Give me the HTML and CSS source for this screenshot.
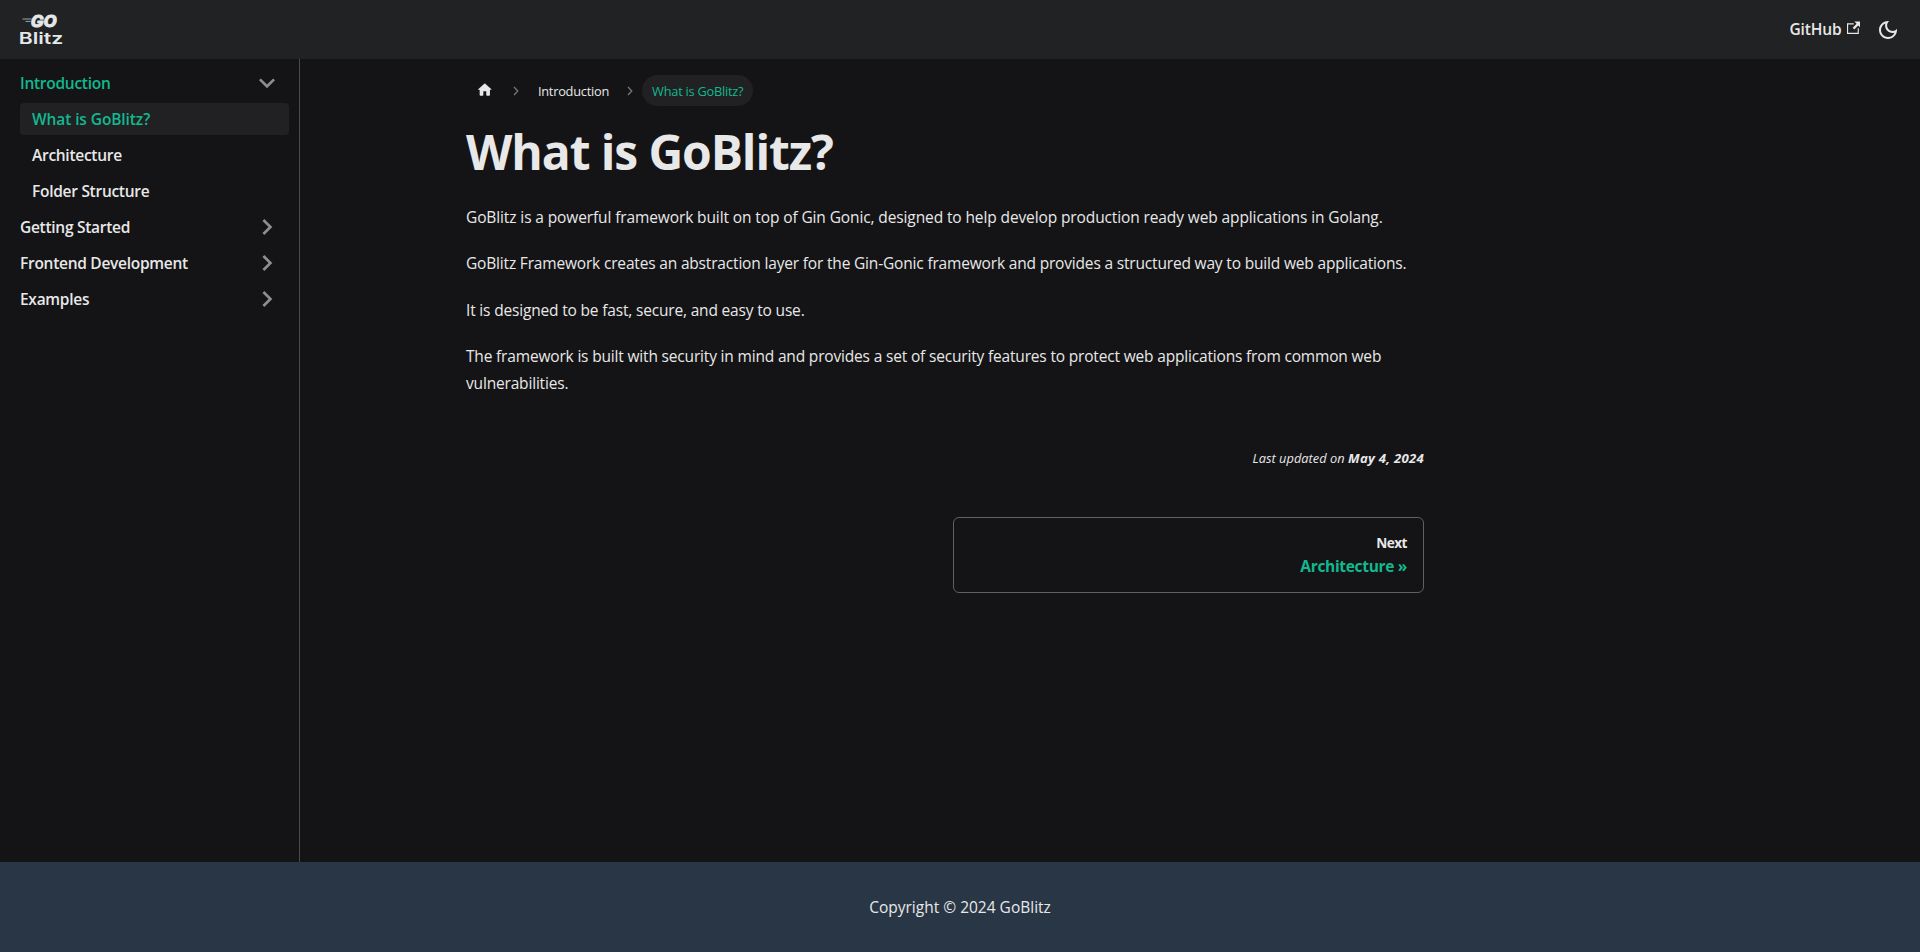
FILE: index.html
```html
<!DOCTYPE html>
<html lang="en">
<head>
<meta charset="utf-8">
<title>What is GoBlitz? | GoBlitz</title>
<link rel="stylesheet" href="styles.css">
</head>
<body>
<header class="navbar">
  <a class="brand" aria-label="GoBlitz">
    <svg class="logo" width="44" height="38" viewBox="0 0 44 38">
      <path class="logo-speed" d="M2.5 8h9M5.5 10.4h5"/>
      <text class="logo-go" x="10.8" y="16" textLength="26" lengthAdjust="spacingAndGlyphs">GO</text>
      <text class="logo-blitz" x="-1.2" y="32.8" textLength="44.5" lengthAdjust="spacingAndGlyphs">Blitz</text>
    </svg>
  </a>
  <nav class="navbar-right">
    <a class="navbar-link">GitHub
      <svg class="external" width="13.5" height="13.5" viewBox="0 0 24 24"><path d="M21 13v10h-21v-19h12v2h-10v15h17v-8h2zm3-12h-10.988l4.035 4-6.977 7.07 2.828 2.828 6.977-7.07 4.125 4.172v-11z"/></svg>
    </a>
    <button class="theme-toggle" aria-label="Switch theme">
      <svg width="24" height="24" viewBox="0 0 24 24"><path d="M9.37,5.51C9.19,6.15,9.1,6.82,9.1,7.5c0,4.08,3.32,7.4,7.4,7.4c0.68,0,1.35-0.09,1.99-0.27C17.45,17.19,14.93,19,12,19c-3.86,0-7-3.14-7-7C5,9.07,6.81,6.55,9.37,5.51z M12,3c-4.97,0-9,4.03-9,9s4.03,9,9,9s9-4.03,9-9c0-0.46-0.04-0.92-0.1-1.36c-0.98,1.37-2.58,2.26-4.4,2.26c-2.98,0-5.4-2.42-5.4-5.4c0-1.81,0.89-3.42,2.26-4.4C12.92,3.04,12.46,3,12,3L12,3z"/></svg>
    </button>
  </nav>
</header>
<div class="layout">
  <aside class="sidebar">
    <ul class="menu">
      <li><a class="menu-link menu-link-open">Introduction<svg class="caret caret-open" width="32" height="32" viewBox="0 0 24 24"><path d="M7.41 15.41L12 10.83l4.59 4.58L18 14l-6-6-6 6z"/></svg></a>
        <ul class="menu menu-nested">
          <li><a class="menu-link menu-link-active">What is GoBlitz?</a></li>
          <li><a class="menu-link">Architecture</a></li>
          <li><a class="menu-link">Folder Structure</a></li>
        </ul>
      </li>
      <li><a class="menu-link">Getting Started<svg class="caret" width="32" height="32" viewBox="0 0 24 24"><path d="M7.41 15.41L12 10.83l4.59 4.58L18 14l-6-6-6 6z"/></svg></a></li>
      <li><a class="menu-link">Frontend Development<svg class="caret" width="32" height="32" viewBox="0 0 24 24"><path d="M7.41 15.41L12 10.83l4.59 4.58L18 14l-6-6-6 6z"/></svg></a></li>
      <li><a class="menu-link">Examples<svg class="caret" width="32" height="32" viewBox="0 0 24 24"><path d="M7.41 15.41L12 10.83l4.59 4.58L18 14l-6-6-6 6z"/></svg></a></li>
    </ul>
  </aside>
  <main class="content">
    <article class="doc">
      <nav class="breadcrumbs">
        <a class="crumb crumb-home" aria-label="Home"><svg width="17.6" height="17.6" viewBox="0 0 24 24"><path d="M10 19v-5h4v5c0 .55.45 1 1 1h3c.55 0 1-.45 1-1v-7h1.7c.46 0 .68-.57.33-.87L12.67 3.6c-.38-.34-.96-.34-1.34 0l-8.36 7.53c-.34.3-.13.87.33.87H5v7c0 .55.45 1 1 1h3c.55 0 1-.45 1-1z"/></svg></a>
        <svg class="separator" width="6" height="10" viewBox="0 0 6 10"><path d="M1 1l3.8 4L1 9"/></svg>
        <a class="crumb">Introduction</a>
        <svg class="separator" width="6" height="10" viewBox="0 0 6 10"><path d="M1 1l3.8 4L1 9"/></svg>
        <a class="crumb crumb-active">What is GoBlitz?</a>
      </nav>
      <h1 class="title">What is GoBlitz?</h1>
      <p class="para">GoBlitz is a powerful framework built on top of Gin Gonic, designed to help develop production ready web applications in Golang.</p>
      <p class="para para-tight">GoBlitz Framework creates an abstraction layer for the Gin-Gonic framework and provides a structured way to build web applications.</p>
      <p class="para para-tight">It is designed to be fast, secure, and easy to use.</p>
      <p class="para para-tight">The framework is built with security in mind and provides a set of security features to protect web applications from common web vulnerabilities.</p>
      <footer class="updated">Last updated on <b class="updated-date">May 4, 2024</b></footer>
      <nav class="pagination">
        <a class="next">
          <span class="next-label">Next</span>
          <span class="next-title">Architecture »</span>
        </a>
      </nav>
    </article>
  </main>
</div>
<footer class="footer">Copyright © 2024 GoBlitz</footer>
</body>
</html>
```
FILE: styles.css
```css
* { box-sizing: border-box; }
body {
  margin: 0;
  height: 952px;
  display: flex;
  flex-direction: column;
  background: #141416;
  color: #e8e8e8;
  font: 400 15.5px/26.4px "Open Sans", "Noto Sans", sans-serif;
}
svg { display: block; fill: currentColor; }
.navbar {
  height: 59px;
  flex: none;
  display: flex;
  align-items: center;
  justify-content: space-between;
  padding: 0 20px;
  background: #202223;
}
.logo { fill: #e4e8ea; overflow: visible; }
.logo-speed { stroke: #a0a5a8; stroke-width: 1; }
.logo-go { font: italic 800 15.5px/1 Inter, sans-serif; stroke: #e4e8ea; stroke-width: .8; }
.logo-blitz { font: 600 16px/1 Inter, sans-serif; }
.navbar-right { display: flex; align-items: center; }
.navbar-link { display: flex; align-items: center; gap: 5px; font-weight: 600; letter-spacing: -.13px; }
.external { margin-top: -3px; }
.theme-toggle {
  width: 32px;
  height: 32px;
  margin: 0 -4px 0 12px;
  padding: 0;
  display: grid;
  place-items: center;
  border: 0;
  background: none;
  color: inherit;
}
.layout { flex: 1; display: flex; min-height: 0; }
.sidebar { width: 300px; padding: 8px; border-right: 1px solid #4b4b4d; }
.menu { list-style: none; margin: 0; padding: 0; display: grid; gap: 4px; width: 281px; }
.menu-nested { margin-top: 4px; padding-left: 12px; }
.menu-link {
  height: 32px;
  display: flex;
  align-items: center;
  justify-content: space-between;
  padding: 0 6px 0 12px;
  border-radius: 4px;
  font-weight: 600;
  letter-spacing: -.28px;
}
.menu-link-open, .menu-link-active { color: #12b88f; }
.menu-link-active { background: #212123; width: 269px; letter-spacing: -.1px; }
.caret { color: #8e8e90; transform: rotate(90deg); }
.caret-open { transform: rotate(180deg); }
.content { flex: 1; display: flex; padding: 16px 0 0 166px; }
.doc { width: 958px; letter-spacing: -.115px; }
.breadcrumbs { display: flex; align-items: center; height: 31px; font-size: 12.8px; line-height: 20px; letter-spacing: -.24px; }
.crumb { padding: 0 10px; }
.crumb-home { margin-top: -1px; padding-right: 11.3px; }
.crumb-active { padding: 5.5px 10px; border-radius: 16px; background: #212123; color: #12b88f; }
.separator { margin: 0 9px 0 8px; fill: none; stroke: #77777a; stroke-width: 1.3; }
.title { margin: 16px 0 22px; font-size: 48px; line-height: 60px; font-weight: 700; letter-spacing: -1.1px; }
.para { margin: 0 0 20px; }
.para-tight { letter-spacing: -.175px; }
.updated { margin-top: 48.5px; text-align: right; font-size: 12.8px; font-style: italic; letter-spacing: .03px; }
.updated-date { font-size: 13.2px; letter-spacing: .25px; }
.pagination { display: flex; justify-content: flex-end; margin-top: 46px; }
.next {
  width: 471px;
  height: 76px;
  padding: 13px 16px;
  border: 1px solid #606062;
  border-radius: 6px;
  text-align: right;
  display: grid;
}
.next-label { font-size: 13.6px; font-weight: 700; line-height: 24px; letter-spacing: -.5px; }
.next-title { color: #12b88f; font-weight: 700; line-height: 23px; letter-spacing: -.32px; }
.footer { height: 90px; flex: none; display: grid; place-items: center; background: #293645; }
```
